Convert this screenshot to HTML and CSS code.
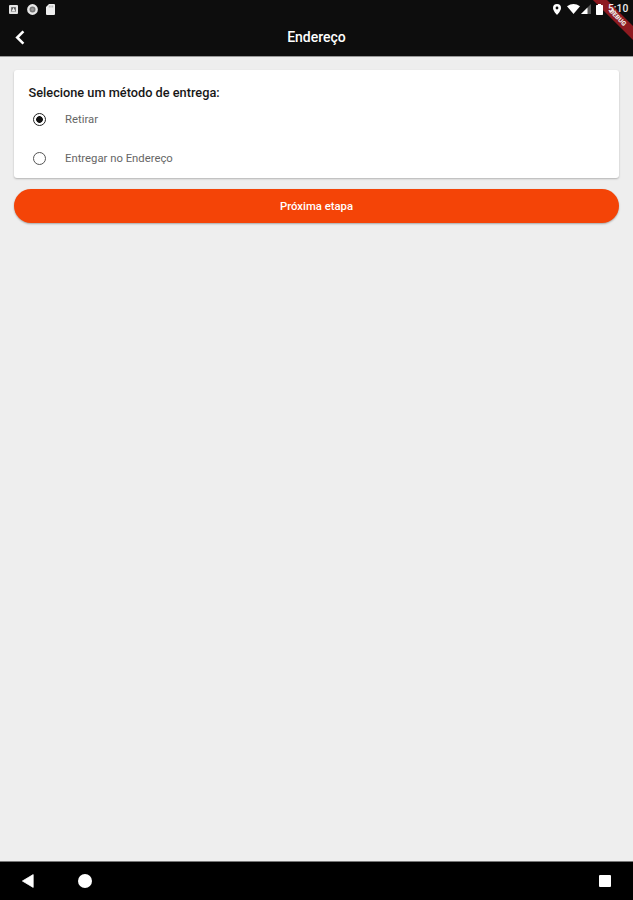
FILE: index.html
```html
<!DOCTYPE html>
<html lang="pt-BR">
<head>
    <meta charset="UTF-8">
    <meta name="viewport" content="width=device-width, initial-scale=1.0">
    <title>Endereço</title>
    <link rel="stylesheet" href="styles.css">
</head>
<body>

    <!-- Status bar -->
    <div class="status-bar">
        <div class="status-left">
            <svg width="9" height="9" viewBox="0 0 9 9"><rect width="9" height="9" rx="1" fill="#e4e4e4"/><path d="M2.2 6.8V2.2h4.6v4.6z" fill="#555"/><path d="M2.5 6.5L4.5 2.6l2 3.9z" fill="#eee"/></svg>
            <svg width="11" height="11" viewBox="0 0 11 11"><circle cx="5.5" cy="5.5" r="4.2" fill="#777" stroke="#e8e8e8" stroke-width="2.4"/><circle cx="5.5" cy="5.5" r="1.4" fill="#999"/></svg>
            <svg width="9" height="11" viewBox="0 0 9 11"><path d="M3 0h5a1 1 0 0 1 1 1v9a1 1 0 0 1-1 1H1a1 1 0 0 1-1-1V3z" fill="#eee"/><path d="M3.3 1.5v2M5 1.5v2M6.7 1.5v2" stroke="#999" stroke-width=".7"/></svg>
        </div>
        <div class="status-right">
            <svg class="pin" width="8" height="11" viewBox="0 0 8 11"><path fill-rule="evenodd" d="M4 0a4 4 0 0 0-4 4c0 3 4 7 4 7s4-4 4-7a4 4 0 0 0-4-4zm0 2.6a1.4 1.4 0 1 1 0 2.8 1.4 1.4 0 0 1 0-2.8z" fill="#fff"/></svg>
            <svg class="wifi" width="13" height="10" viewBox="0 0 13 10"><path d="M0 2.2Q6.500-2 13 2.200L6.500 10z" fill="#fff"/></svg>
            <svg class="signal" width="10" height="10" viewBox="0 0 10 10"><path d="M10 0v10H0z" fill="#555"/><path d="M6.500 3.500V10H0z" fill="#fff"/></svg>
            <svg class="battery" width="7" height="11" viewBox="0 0 7 11"><path d="M2 0h3v1h1.300q.7 0 .7.700v8.600q0 .7-.7.700H.7q-.7 0-.7-.7V1.700Q0 1 .7 1H2z" fill="#fff"/></svg>
            <span class="time">5:10</span>
        </div>
    </div>
    <div class="debug-corner"><div class="debug-banner">DEBUG</div></div>

    <!-- App bar -->
    <header class="app-bar">
        <svg class="back" width="10" height="15" viewBox="0 0 10 15"><path d="M8.400 1.400L2.200 7.500l6.200 6.100" fill="none" stroke="#fff" stroke-width="2.600"/></svg>
        <h1>Endereço</h1>
    </header>

    <main class="content">
        <div class="card">
            <h2>Selecione um método de entrega:</h2>
            <div class="option">
                <span class="radio checked"></span>
                <span>Retirar</span>
            </div>
            <div class="option">
                <span class="radio"></span>
                <span>Entregar no Endereço</span>
            </div>
        </div>
        <button class="next-button">Próxima etapa</button>
    </main>

    <!-- Android navigation -->
    <nav class="nav-bar">
        <svg width="12" height="14" viewBox="0 0 12 14"><path d="M11.200.6v12.800L.4 7z" fill="#fff" stroke="#fff" stroke-width=".8" stroke-linejoin="round"/></svg>
        <svg class="home" width="14" height="14" viewBox="0 0 14 14"><circle cx="7" cy="7" r="7" fill="#fff"/></svg>
        <svg class="recent" width="12" height="12" viewBox="0 0 12 12"><rect width="12" height="12" rx="1" fill="#fff"/></svg>
    </nav>

</body>
</html>
```
FILE: styles.css
```css
* {
    box-sizing: border-box;
}
body {
    margin: 0;
    height: 900px;
    display: flex;
    flex-direction: column;
    position: relative;
    overflow: hidden;
    background: #eeeeee;
    font-family: Roboto, sans-serif;
}
svg {
    display: block;
    flex: none;
}
.status-bar {
    height: 18px;
    flex: none;
    display: flex;
    justify-content: space-between;
    align-items: center;
    padding: 0 5px 0 9px;
    background: #0d0d0d;
}
.status-left, .status-right {
    display: flex;
    align-items: center;
}
.status-left {
    gap: 8.5px;
}
.status-right {
    position: relative;
    z-index: 1;
}
.wifi {
    margin-left: 6px;
}
.signal {
    margin-left: 1px;
}
.battery {
    margin-left: 5px;
}
.time {
    width: 20px;
    margin-left: 5px;
    color: #eee;
    font-size: 10.3px;
    font-weight: 500;
    line-height: 18px;
    white-space: nowrap;
}
.debug-corner {
    position: absolute;
    top: 0;
    right: 0;
    width: 50px;
    height: 50px;
    overflow: hidden;
}
.debug-banner {
    position: absolute;
    top: 12px;
    right: -24px;
    width: 80px;
    height: 10px;
    padding-left: 2px;
    transform: rotate(45deg);
    background: #8e1a20;
    color: #eee;
    font-size: 6.5px;
    font-weight: 900;
    line-height: 10px;
    text-align: center;
}
.app-bar {
    height: 38px;
    flex: none;
    display: flex;
    align-items: center;
    padding: 0 15px;
    background: #0d0d0d;
    box-shadow: 0 1px 0 #999;
    color: white;
}
.app-bar h1 {
    flex: 1;
    margin: 0 10px 0 0;
    font-size: 14px;
    font-weight: 500;
    text-align: center;
}
.content {
    flex: 1;
    padding: 14px 14px 0;
}
.card {
    height: 108px;
    padding: 15px 14.5px 0;
    border-radius: 3px;
    background: white;
    box-shadow: 0 1px 2px rgba(0, 0, 0, 0.25);
}
.card h2 {
    margin: 0;
    color: #171717;
    font-size: 12.75px;
    font-weight: 500;
    line-height: 16px;
}
.option {
    height: 39px;
    display: flex;
    align-items: center;
    padding-left: 4.5px;
    color: #666;
    font-size: 11.3px;
}
.card h2 + .option {
    margin-top: -1px;
}
.radio {
    width: 13px;
    height: 13px;
    margin-right: 19px;
    border: 1.5px solid #555;
    border-radius: 50%;
}
.radio.checked {
    border-color: #222;
    background: radial-gradient(circle, #111 3px, white 3.7px);
}
.next-button {
    display: block;
    width: 100%;
    height: 34px;
    margin-top: 11px;
    border: none;
    border-radius: 17px;
    background: #f44407;
    box-shadow: 0 1px 2px rgba(0, 0, 0, 0.3);
    color: white;
    font-family: inherit;
    font-size: 11.3px;
    font-weight: 500;
}
.nav-bar {
    height: 39px;
    flex: none;
    display: flex;
    align-items: center;
    padding: 0 22px;
    border-top: 1px solid #777;
    background: black;
}
.home {
    margin-left: 44px;
}
.recent {
    margin-left: auto;
}
```
